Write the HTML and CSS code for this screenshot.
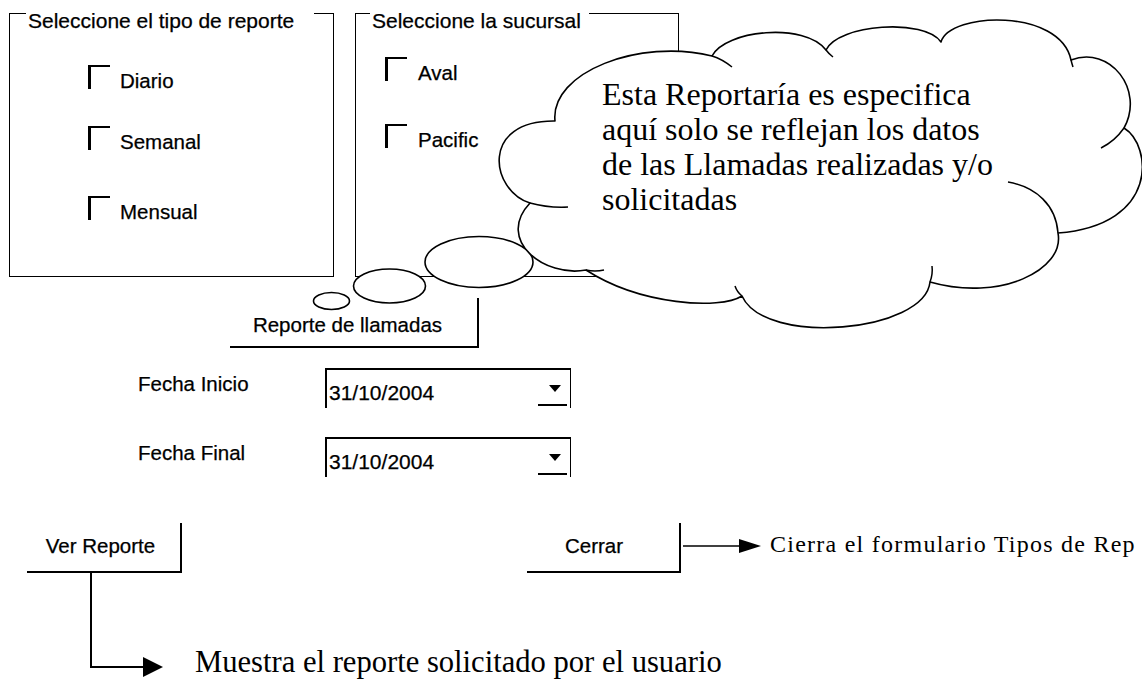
FILE: index.html
```html
<!DOCTYPE html>
<html lang="es">
<head>
<meta charset="utf-8">
<title>Reporte de llamadas</title>
<link rel="stylesheet" href="styles.css">
</head>
<body>
<div class="page">
  <div class="top">
    <div class="group group-1">
      <div class="group-title">Seleccione el tipo de reporte</div>
      <div class="opt opt-a"><span class="chk"></span><span class="opt-label">Diario</span></div>
      <div class="opt opt-b"><span class="chk"></span><span class="opt-label">Semanal</span></div>
      <div class="opt opt-c"><span class="chk"></span><span class="opt-label">Mensual</span></div>
    </div>
    <div class="group group-2">
      <div class="group-title">Seleccione la sucursal</div>
      <div class="opt opt-d"><span class="chk"></span><span class="opt-label">Aval</span></div>
      <div class="opt opt-e"><span class="chk"></span><span class="opt-label">Pacific</span></div>
    </div>
  </div>

  <div class="btn-row">
    <div class="btn btn-llamadas">Reporte de llamadas</div>
  </div>

  <div class="field field-1">
    <span class="flabel">Fecha Inicio</span>
    <div class="combo"><span class="combo-text">31/10/2004</span><span class="combo-btn"><span class="tri"></span></span></div>
  </div>
  <div class="field field-2">
    <span class="flabel">Fecha Final</span>
    <div class="combo"><span class="combo-text">31/10/2004</span><span class="combo-btn"><span class="tri"></span></span></div>
  </div>

  <div class="actions">
    <div class="btn btn-ver">Ver Reporte</div>
    <div class="btn btn-cerrar">Cerrar</div>
    <div class="close-note">
      <svg class="arrow-r" width="80" height="16" viewBox="0 0 80 16"><line x1="0" y1="8" x2="60" y2="8" stroke="#000" stroke-width="1.6"/><polygon points="56,1 78,8 56,15" fill="#000"/></svg>
      <span class="note-text">Cierra el formulario Tipos de Rep</span>
    </div>
  </div>

  <div class="note-row">
    <span class="elbow"></span>
    <svg class="arrow-head" width="20" height="20" viewBox="0 0 20 20"><polygon points="0,0 20,10 0,20" fill="#000"/></svg>
    <span class="note-big">Muestra el reporte solicitado por el usuario</span>
  </div>

  <svg class="overlay" width="1142" height="679" viewBox="0 0 1142 679">
    <ellipse cx="331.5" cy="301" rx="18" ry="8.5" fill="#fff" stroke="#000" stroke-width="1.6"/>
    <ellipse cx="389.5" cy="286" rx="36" ry="17" fill="#fff" stroke="#000" stroke-width="1.6"/>
    <ellipse cx="479" cy="262" rx="54" ry="25.5" fill="#fff" stroke="#000" stroke-width="1.6"/>
    <path fill="#fff" stroke="#000" stroke-width="1.6" stroke-linejoin="round"
      d="M555,121 C550,72 640,38 712,56 C725,30 805,22 826,50 C838,24 925,18 941,42 C950,12 1060,8 1071,60 C1110,45 1145,90 1124,128 C1152,145 1160,225 1058,233 C1065,270 1000,302 930,282 C925,332 765,347 742,296 C720,310 640,305 586,270 C545,278 495,240 530,203 C490,190 480,120 555,121 Z"/>
    <g fill="none" stroke="#000" stroke-width="1.5">
      <path d="M712,56 Q722,59 732,67"/>
      <path d="M826,50 Q829,54 833,57"/>
      <path d="M1071,60 Q1072,64 1073,67"/>
      <path d="M1124,128 Q1115,141 1101,148"/>
      <path d="M1058,233 C1056,205 1036,187 1008,182"/>
      <path d="M930,282 Q933,274 932,266"/>
      <path d="M742,296 Q737,292 735,286"/>
      <path d="M586,270 Q595,272 604,270"/>
      <path d="M530,203 Q548,208 568,207"/>
    </g>
  </svg>
  <div class="cloud-text">Esta Reportaría es especifica<br>aquí solo se reflejan los datos<br>de las Llamadas realizadas y/o<br>solicitadas</div>
</div>
</body>
</html>
```

FILE: styles.css
```css
html, body {
  margin: 0;
  padding: 0;
  background: #fff;
  overflow: hidden;
}

body {
  width: 1142px;
  height: 679px;
  font-family: "Liberation Sans", Arial, sans-serif;
  color: #000;
}

.page {
  position: relative;
  width: 1142px;
  height: 679px;
  overflow: hidden;
}

/* ---------- group boxes ---------- */
.top {
  display: flex;
  gap: 21px;
  padding: 13px 0 0 9px;
}

.group {
  box-sizing: border-box;
  height: 264px;
  border: 1px solid #000;
  display: flex;
  flex-direction: column;
  align-items: flex-start;
}

.group-1 { width: 325px; }
.group-2 { width: 324px; }

.group-title {
  background: #fff;
  font-size: 21px;
  line-height: 23px;
  margin-top: -5px;
  white-space: nowrap;
  -webkit-text-stroke: 0.25px #000;
}

.group-1 .group-title { margin-left: 16px; padding: 0 20px 0 2px; }
.group-2 .group-title { margin-left: 14px; padding: 0 8px 0 2px; }

.opt {
  display: flex;
  align-items: flex-end;
  height: 24px;
}

.chk {
  flex: none;
  box-sizing: border-box;
  width: 22px;
  height: 24px;
  border-top: 2px solid #000;
  border-left: 3px solid #000;
}

.opt-label {
  font-size: 20.5px;
  line-height: 16px;
  margin-left: 10px;
  white-space: nowrap;
  -webkit-text-stroke: 0.25px #000;
}

.group-1 .opt { margin-left: 78px; }
.group-2 .opt { margin-left: 29px; }
.group-2 .opt-label { margin-left: 11px; }

.opt-a { margin-top: 33px; }
.opt-b { margin-top: 37px; }
.opt-c { margin-top: 46px; }
.opt-d { margin-top: 25px; }
.opt-e { margin-top: 43px; }

/* ---------- buttons ---------- */
.btn {
  box-sizing: border-box;
  flex: none;
  height: 50px;
  border-right: 2px solid #000;
  border-bottom: 2px solid #000;
  display: flex;
  align-items: flex-end;
  justify-content: center;
  font-size: 20.5px;
  line-height: 23px;
  padding-bottom: 10px;
  white-space: nowrap;
  -webkit-text-stroke: 0.25px #000;
}

.btn-row {
  display: flex;
  margin-top: 21px;
  padding-left: 230px;
}

.btn-llamadas {
  width: 249px;
  padding-right: 12px;
}

/* ---------- date fields ---------- */
.field {
  display: flex;
  align-items: flex-start;
  padding-left: 138px;
}

.field-1 { margin-top: 20px; }
.field-2 { margin-top: 29px; }

.flabel {
  width: 187px;
  font-size: 20.5px;
  line-height: 23px;
  margin-top: 4px;
  white-space: nowrap;
  -webkit-text-stroke: 0.25px #000;
}

.combo {
  box-sizing: border-box;
  width: 246px;
  height: 40px;
  border-top: 2px solid #000;
  border-left: 2px solid #000;
  border-right: 1px solid #000;
  padding-left: 2px;
  display: flex;
  justify-content: space-between;
  align-items: flex-start;
}

.combo-text {
  font-size: 21px;
  line-height: 24px;
  margin-top: 11px;
  -webkit-text-stroke: 0.25px #000;
}

.combo-btn {
  box-sizing: border-box;
  width: 29px;
  height: 23px;
  margin-top: 13px;
  margin-right: 3px;
  padding: 2px 0 0 4px;
  border-bottom: 2px solid #000;
  display: flex;
  justify-content: center;
}

.tri {
  width: 0;
  height: 0;
  border-left: 6.5px solid transparent;
  border-right: 6.5px solid transparent;
  border-top: 7px solid #000;
}

/* ---------- bottom actions ---------- */
.actions {
  display: flex;
  align-items: flex-start;
  margin-top: 46px;
  padding-left: 27px;
}

.btn-ver {
  width: 155px;
  padding-right: 6px;
  padding-bottom: 14px;
}

.btn-cerrar {
  width: 154px;
  margin-left: 345px;
  padding-right: 18px;
  padding-bottom: 14px;
}

.close-note {
  flex: none;
  display: flex;
  align-items: flex-start;
  margin-left: 2px;
  white-space: nowrap;
}

.arrow-r {
  display: block;
  margin-top: 15px;
}

.note-text {
  font-family: "Liberation Serif", "Times New Roman", serif;
  font-size: 24px;
  line-height: 27px;
  letter-spacing: 1.25px;
  margin-left: 7px;
  margin-top: 8px;
}

.note-row {
  display: flex;
  align-items: flex-end;
  padding-left: 90px;
}

.elbow {
  box-sizing: border-box;
  width: 53px;
  height: 95px;
  border-left: 2px solid #000;
  border-bottom: 2px solid #000;
}

.arrow-head {
  display: block;
  margin-bottom: -9px;
}

.note-big {
  font-family: "Liberation Serif", "Times New Roman", serif;
  font-size: 30.6px;
  line-height: 34px;
  margin-left: 32px;
  margin-bottom: -11px;
  white-space: nowrap;
}

/* ---------- thought cloud (overlay) ---------- */
.overlay {
  position: absolute;
  left: 0;
  top: 0;
  pointer-events: none;
}

.cloud-text {
  position: absolute;
  left: 602px;
  top: 77px;
  font-family: "Liberation Serif", "Times New Roman", serif;
  font-size: 32px;
  line-height: 35px;
  white-space: nowrap;
}
```
